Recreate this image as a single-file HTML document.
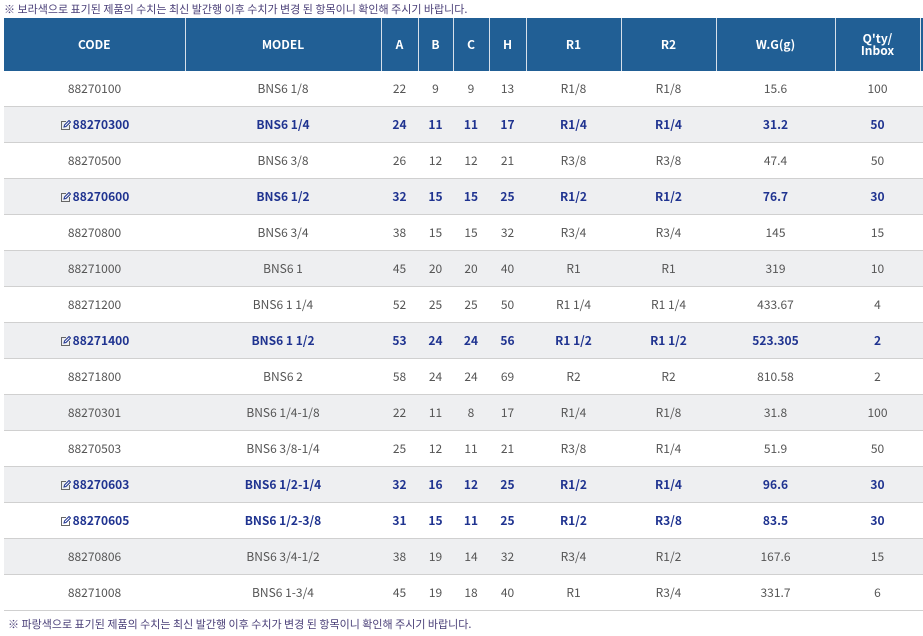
<!DOCTYPE html>
<html><head><meta charset="utf-8"><style>
body{margin:0;background:#fff;font-family:"Noto Sans CJK KR","Liberation Sans",sans-serif;width:923px;height:636px;overflow:hidden}
.note{font-size:11px;color:#4a3f78;padding-left:4px;height:18px;line-height:18px}
table{position:absolute;left:4px;top:18px;border-collapse:collapse;table-layout:fixed;width:919px}
th{background:#215f95;color:#fff;font-size:12px;font-weight:bold;height:53px;border-right:1px solid #d7e0ea;padding:0;line-height:12px}
td{height:35px;border-bottom:1px solid #d0d0d0;text-align:center;font-size:12px;color:#555;padding:0}
tr.g td{background:#eeeff1}
tr.b td{color:#1f3390;font-weight:bold}
.ic{display:inline-block;vertical-align:-2px;margin-right:2px}
.bn{position:absolute;left:4px;top:615px}
</style></head><body>
<div class="note">※ 보라색으로 표기된 제품의 수치는 최신 발간행 이후 수치가 변경 된 항목이니 확인해 주시기 바랍니다.</div>
<table>
<colgroup><col style="width:181px"><col style="width:196px"><col style="width:37px"><col style="width:35px"><col style="width:36px"><col style="width:37px"><col style="width:95px"><col style="width:95px"><col style="width:119px"><col style="width:85px"><col style="width:3px"></colgroup>
<tr><th>CODE</th><th>MODEL</th><th>A</th><th>B</th><th>C</th><th>H</th><th>R1</th><th>R2</th><th>W.G(g)</th><th>Q'ty/<br>Inbox</th><th></th></tr>
<tbody id="tb"></tbody>
</table>
<div class="note bn">※ 파랑색으로 표기된 제품의 수치는 최신 발간행 이후 수치가 변경 된 항목이니 확인해 주시기 바랍니다.</div>
<script>
var d=[["88270100","BNS6 1/8",22,9,9,13,"R1/8","R1/8","15.6",100,0],
["88270300","BNS6 1/4",24,11,11,17,"R1/4","R1/4","31.2",50,1],
["88270500","BNS6 3/8",26,12,12,21,"R3/8","R3/8","47.4",50,0],
["88270600","BNS6 1/2",32,15,15,25,"R1/2","R1/2","76.7",30,1],
["88270800","BNS6 3/4",38,15,15,32,"R3/4","R3/4","145",15,0],
["88271000","BNS6 1",45,20,20,40,"R1","R1","319",10,0],
["88271200","BNS6 1 1/4",52,25,25,50,"R1 1/4","R1 1/4","433.67",4,0],
["88271400","BNS6 1 1/2",53,24,24,56,"R1 1/2","R1 1/2","523.305",2,1],
["88271800","BNS6 2",58,24,24,69,"R2","R2","810.58",2,0],
["88270301","BNS6 1/4-1/8",22,11,8,17,"R1/4","R1/8","31.8",100,0],
["88270503","BNS6 3/8-1/4",25,12,11,21,"R3/8","R1/4","51.9",50,0],
["88270603","BNS6 1/2-1/4",32,16,12,25,"R1/2","R1/4","96.6",30,1],
["88270605","BNS6 1/2-3/8",31,15,11,25,"R1/2","R3/8","83.5",30,1],
["88270806","BNS6 3/4-1/2",38,19,14,32,"R3/4","R1/2","167.6",15,0],
["88271008","BNS6 1-3/4",45,19,18,40,"R1","R3/4","331.7",6,0]];
var ic='<svg class="ic" width="11" height="11" viewBox="0 0 11 11"><path d="M6 1.5H1.5v8h8V5" fill="none" stroke="#666" stroke-width="1"/><path d="M4 7l.5-2 4.5-4.5 1.5 1.5-4.5 4.5z" fill="none" stroke="#1f3390" stroke-width="1"/></svg>';
var h="";d.forEach(function(r,i){h+='<tr class="'+(i%2?'g ':'')+(r[10]?'b':'')+'">';
for(var j=0;j<10;j++)h+='<td>'+(j==0&&r[10]?ic:'')+r[j]+'</td>';h+='<td></td></tr>';});
document.getElementById("tb").innerHTML=h;
</script>
</body></html>
